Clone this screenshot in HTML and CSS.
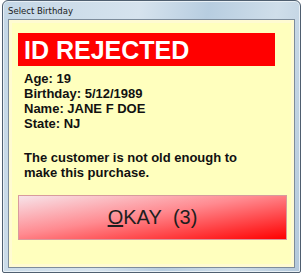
FILE: index.html
```html
<!DOCTYPE html>
<html lang="en">
<head>
    <meta charset="UTF-8">
    <title>Select Birthday</title>
    <link rel="stylesheet" href="styles.css">
</head>
<body>
    <div class="window">
        <div class="titlebar">Select Birthday</div>
        <div class="client">
            <div class="panel">
                <div class="banner">ID REJECTED</div>
                <div class="info">
                    Age: 19<br>
                    Birthday: 5/12/1989<br>
                    Name: JANE F DOE<br>
                    State: NJ
                </div>
                <p class="msg">The customer is not old enough to make this purchase.</p>
                <button class="okay"><u>O</u>KAY&nbsp;&nbsp;(3)</button>
            </div>
        </div>
    </div>
</body>
</html>
```

FILE: styles.css
```css
body {
    margin: 0;
    background-color: #fff;
    font-family: 'Liberation Sans', Arial, sans-serif;
}
.window {
    margin-left: 2px;
    width: 297px;
    height: 271px;
    border: 1px solid #4f5f70;
    border-radius: 6px 6px 2px 2px;
    background: linear-gradient(100deg, #c4d7e6 0%, #d6e3ee 40%, #b7cde0 60%, #cfdeea 80%, #b3c8db 100%);
    box-shadow: inset 0 0 0 1px #e8f0f6;
}
.titlebar {
    height: 18px;
    padding-left: 5px;
    font-family: 'DejaVu Sans', sans-serif;
    font-size: 8.5px;
    line-height: 20px;
    color: #1a1a1a;
}
.client {
    margin-left: 5px;
    width: 287px;
    height: 249px;
    border: 1px solid #7d8c9b;
    background-color: #fffbd2;
    padding: 3px;
    box-sizing: border-box;
}
.panel {
    height: 100%;
    background-color: #ffffbe;
    padding: 10px 0 0 6px;
    box-sizing: border-box;
}
.banner {
    width: 251px;
    height: 33px;
    padding-left: 6px;
    background-color: #ff0000;
    color: #fff;
    font-weight: bold;
    font-size: 25px;
    line-height: 34px;
}
.info {
    margin-top: 5px;
    padding-left: 6px;
    font-weight: bold;
    font-size: 13px;
    line-height: 15px;
    color: #111;
}
.msg {
    margin: 19px 0 0 0;
    padding-left: 6px;
    width: 230px;
    font-weight: bold;
    font-size: 13px;
    line-height: 15px;
    color: #111;
}
.okay {
    display: block;
    margin-top: 15px;
    width: 269px;
    height: 45px;
    border: 1px solid #d89a9e;
    background: linear-gradient(to bottom right, #f7e3e9 0%, #ff8a90 45%, #ff0000 100%);
    font-family: 'Liberation Sans', Arial, sans-serif;
    font-size: 20px;
    color: #1e1e1e;
    padding: 0;
    cursor: pointer;
}
```
